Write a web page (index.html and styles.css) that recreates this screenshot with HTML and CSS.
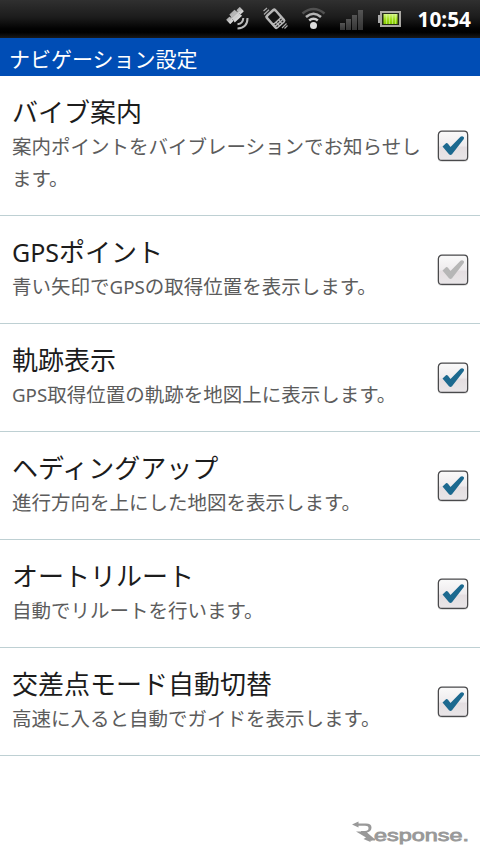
FILE: index.html
```html
<!DOCTYPE html>
<html lang="ja">
<head>
<meta charset="utf-8">
<title>ナビゲーション設定</title>
<link rel="stylesheet" href="styles.css">
</head>
<body>
<svg class="defs" width="0" height="0" aria-hidden="true">
  <defs>
    <linearGradient id="box" x1="0" y1="0" x2="0" y2="1"><stop offset="0" stop-color="#fafafa"/><stop offset=".5" stop-color="#eeebed"/><stop offset=".55" stop-color="#e4dee1"/><stop offset="1" stop-color="#e9e6e8"/></linearGradient>
    <linearGradient id="metal" x1="0" y1="0" x2="0" y2="1"><stop offset="0" stop-color="#aaa"/><stop offset="1" stop-color="#ddd"/></linearGradient>
    <linearGradient id="bars" x1="0" y1="0" x2="0" y2="1"><stop offset="0" stop-color="#555"/><stop offset="1" stop-color="#353535"/></linearGradient>
    <linearGradient id="charge" x1="0" y1="0" x2="0" y2="1"><stop offset="0" stop-color="#d5f783"/><stop offset=".5" stop-color="#a4e022"/><stop offset="1" stop-color="#83c900"/></linearGradient>
    <symbol id="check" viewBox="0 0 32 32">
      <rect x="1" y="1.500" width="30" height="30" rx="3.500" fill="none" stroke="#ddd"/>
      <rect x="1.400" y="1.200" width="29.200" height="29.200" rx="3.500" fill="url(#box)" stroke="#4a4a4c" stroke-width="1.200"/>
      <path d="M5.500 16.500L9 13.200Q10 12.700 11 13.700L13.500 17L23.500 6.800Q24.500 6 26 6.500Q27.700 7.200 26.800 9L15 24.300Q13.500 25.800 12 24.300Z" fill="currentColor"/>
    </symbol>
  </defs>
</svg>
<header class="status">
  <svg class="icons" width="200" height="38" viewBox="0 0 200 38">
    <g fill="url(#metal)" transform="translate(15 15.500) rotate(-43)">
      <path d="M-3.500 -4.500H3.500L5 5H-5Z"/><rect x="-9.500" y="-3" width="5" height="6" rx=".8"/><rect x="4.500" y="-3" width="5" height="6" rx=".8"/><rect x="-6" y="-1" width="12" height="2"/>
    </g>
    <g fill="none" stroke="#bbb" stroke-width="2">
      <path d="M17.500 24.300Q23 23.500 23.300 18M17.500 28.500Q27.500 28 27.500 18"/>
    </g>
    <g transform="translate(55.300 18.700) rotate(-42)">
      <rect x="-6.900" y="-9" width="13.800" height="18" rx="2.500" fill="#b7b7b7"/>
      <rect x="-4.500" y="-6.500" width="9" height="8.800" rx="1" fill="#151515"/>
      <path d="M-4.500 4.300h2.200M-1.100 4.300h2.200M2.300 4.300h2.200M-4.500 6.900h2.200M-1.100 6.900h2.200M2.300 6.900h2.200" stroke="#222" stroke-width="1.200"/>
    </g>
    <path d="M44 14.500l5-4.800M43.500 11l3.500-3M62 28l4.500-4.500M64.500 28.500l3-3" stroke="#aaa" stroke-width="1.200" fill="none"/>
    <g fill="none" stroke-width="2.600">
      <path d="M82.500 13.500Q93.500 4.500 104.500 13.500" stroke="#515151"/>
      <path d="M86 17Q93.500 10.500 101 17" stroke="#b5b5b5"/>
      <path d="M89.200 20.500Q93.500 17 97.800 20.500" stroke="#cfcfcf"/>
    </g>
    <circle cx="93.500" cy="25.500" r="3.500" fill="#ddd"/>
    <g fill="url(#bars)"><rect x="120" y="23" width="5" height="7"/><rect x="126" y="19" width="5" height="11"/><rect x="132" y="15" width="5" height="15"/><rect x="138" y="10" width="5" height="20"/></g>
    <rect x="158" y="15" width="3" height="8" fill="#aaa"/>
    <rect x="161" y="12" width="19" height="14" fill="#242b18" stroke="#aaa8a3" stroke-width="2"/>
    <rect x="163.500" y="14" width="14" height="10" fill="url(#charge)"/>
    <path d="M166.500 14v10M169.500 14v10M172.500 14v10M175.500 14v10" stroke="#d7f79b" stroke-width=".6"/>
  </svg>
  <time class="clock">10:54</time>
</header>
<h1 class="title">ナビゲーション設定</h1>
<main class="list">
  <section class="row"><div class="copy"><h2>バイブ案内</h2><p>案内ポイントをバイブレーションでお知らせします。</p></div><svg class="check"><use href="#check"/></svg></section>
  <section class="row"><div class="copy"><h2><span class="latin">GPS</span>ポイント</h2><p>青い矢印で<span class="latin">GPS</span>の取得位置を表示します。</p></div><svg class="check off"><use href="#check"/></svg></section>
  <section class="row"><div class="copy"><h2>軌跡表示</h2><p><span class="latin">GPS</span>取得位置の軌跡を地図上に表示します。</p></div><svg class="check"><use href="#check"/></svg></section>
  <section class="row"><div class="copy"><h2>ヘディングアップ</h2><p>進行方向を上にした地図を表示します。</p></div><svg class="check"><use href="#check"/></svg></section>
  <section class="row"><div class="copy"><h2>オートリルート</h2><p>自動でリルートを行います。</p></div><svg class="check"><use href="#check"/></svg></section>
  <section class="row"><div class="copy"><h2>交差点モード自動切替</h2><p>高速に入ると自動でガイドを表示します。</p></div><svg class="check"><use href="#check"/></svg></section>
</main>
<footer class="brand">
  <svg width="120" height="28" viewBox="0 0 120 28" role="img" aria-label="Response.">
    <path d="M1 4.500L7.500 1.500V3.500H15Q20.500 3.500 20.500 7.500Q20.500 11.500 16 12.500L23 18.500H24V20.500H19.500L10 12.500V11H14Q17.500 10.800 17.500 8.200Q17.500 5.800 14 5.800H7.500V7.500Z" fill="#999"/>
    <path d="M5 11.500H12L21 19V20.500H19.500V22L12.500 19L15 17.500Z" fill="#999"/>
    <text class="wordmark" x="23" y="20.500" textLength="95" lengthAdjust="spacingAndGlyphs">esponse.</text>
  </svg>
</footer>
</body>
</html>
```
FILE: styles.css
```css
* { box-sizing: border-box; }
body {
  margin: 0;
  width: 480px;
  height: 854px;
  display: flex;
  flex-direction: column;
  overflow: hidden;
  background: #fff;
  font-family: "Noto Sans CJK JP", sans-serif;
}
.defs { position: absolute; }
.status {
  height: 38px;
  flex: none;
  display: flex;
  justify-content: flex-end;
  align-items: center;
  padding-right: 9px;
  background: linear-gradient(#303030, #1c1c1c 45%, #030303 75%, #000 85%, #191919);
}
.icons { flex: none; }
.clock {
  width: 51px;
  display: flex;
  justify-content: flex-end;
  color: #fff;
  font: 700 20.8px/38px "Noto Sans", sans-serif;
}
.title {
  flex: none;
  height: 38px;
  margin: 0;
  padding: 1px 9px 0;
  background: #004db5;
  color: #fff;
  font-size: 21px;
  font-weight: 400;
  line-height: 38px;
}
.row {
  display: flex;
  align-items: center;
  justify-content: space-between;
  height: 108px;
  padding: 0 11px 0 12px;
  border-bottom: 1px solid #bed0d3;
}
.row:first-child { height: 140px; }
.copy { width: 414px; flex: none; padding-bottom: 5px; }
.row h2 {
  margin: 0;
  color: #1c1c1c;
  font-size: 26px;
  font-weight: 400;
  line-height: 38px;
  white-space: nowrap;
}
.row p {
  margin: 0;
  color: #5c5c5c;
  font-size: 19.5px;
  line-height: 32px;
}
.latin { font-family: "Noto Sans", sans-serif; font-size: .96em; line-height: 1; }
.check { width: 32px; height: 32px; flex: none; color: #1c698f; }
.off { color: #b6b6b6; }
.brand { display: flex; justify-content: flex-end; padding: 64px 9px 0 0; }
.wordmark { font: 400 16.5px "Liberation Sans", sans-serif; fill: #999; stroke: #999; stroke-width: .8; }
```
